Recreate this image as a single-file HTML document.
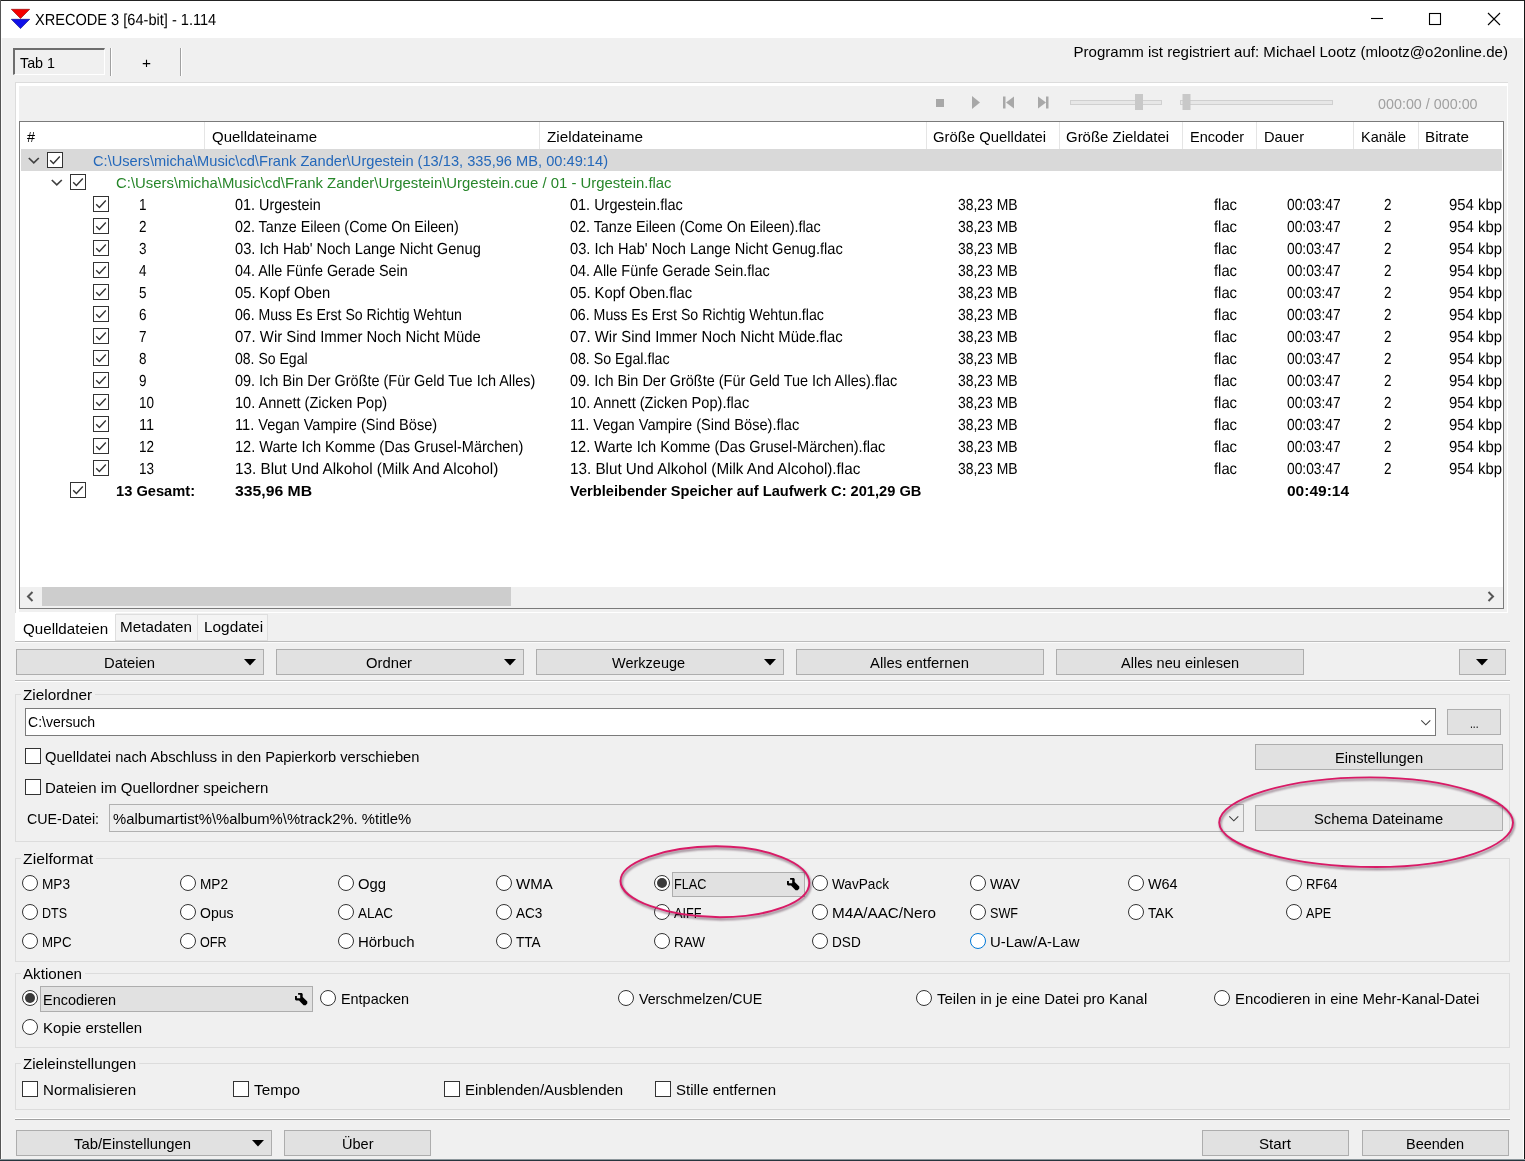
<!DOCTYPE html>
<html lang="de">
<head>
<meta charset="utf-8">
<title>XRECODE 3 [64-bit] - 1.114</title>
<style>
html,body{margin:0;padding:0;}
body{width:1525px;height:1161px;overflow:hidden;background:#f0f0f0;font-family:"Liberation Sans",sans-serif;font-size:15px;color:#000;}
#w{position:relative;width:1525px;height:1161px;overflow:hidden;background:#f0f0f0;}
.r{position:absolute;box-sizing:border-box;}
.t{position:absolute;white-space:pre;line-height:20px;height:20px;}
svg{position:absolute;overflow:visible;}
.btn{position:absolute;box-sizing:border-box;background:#e1e1e1;border:1px solid #adadad;}
.cb{position:absolute;box-sizing:border-box;width:16px;height:16px;background:#fff;border:1px solid #333;}
.rb{position:absolute;box-sizing:border-box;width:16px;height:16px;background:#fff;border:1px solid #333;border-radius:50%;}
.gb{position:absolute;box-sizing:border-box;border:1px solid #dcdcdc;}
</style>
</head>
<body>
<div id="w">
<div class="r" style="left:0px;top:0px;width:1525px;height:38px;background:#ffffff;"></div>
<svg style="left:11px;top:9px" width="20" height="20" viewBox="0 0 20 20"><polygon points="0.300,0.300 18.700,0.300 9.500,9.500" fill="#f40000" stroke="#8a0000" stroke-width="0.600"/><polygon points="0.300,10.300 18.700,10.300 9.500,19.600" fill="#1010e8" stroke="#000078" stroke-width="0.600"/></svg>
<span class="t" style="top:11px;left:35px;font-size:16px;text-rendering:geometricPrecision;transform:scaleX(0.9109);transform-origin:left center;">XRECODE 3 [64-bit] - 1.114</span>
<svg style="left:1360px;top:0" width="165" height="38" viewBox="0 0 165 38"><g stroke="#000" stroke-width="1.1" fill="none"><path d="M11 18.5H23"/><rect x="69.5" y="13.5" width="11" height="11"/><path d="M128 13L140 25M140 13L128 25"/></g></svg>
<div class="r" style="left:13px;top:48px;width:92px;height:27px;border-top:2px solid #6d6d6d;border-left:2px solid #6d6d6d;border-right:1px solid #fff;border-bottom:1px solid #fff;"></div>
<span class="t" style="top:53px;left:20px;transform:scaleX(0.9546);transform-origin:left center;">Tab 1</span>
<div class="r" style="left:110px;top:48px;width:1px;height:28px;background:#a0a0a0;"></div>
<div class="r" style="left:111px;top:48px;width:1px;height:28px;background:#ffffff;"></div>
<div class="r" style="left:180px;top:48px;width:1px;height:28px;background:#a0a0a0;"></div>
<div class="r" style="left:181px;top:48px;width:1px;height:28px;background:#ffffff;"></div>
<span class="t" style="top:53px;left:141.5px;transform:scaleX(1.0278);transform-origin:left center;">+</span>
<span class="t" style="top:42px;right:17px;transform:scaleX(1.0035);transform-origin:right center;">Programm ist registriert auf: Michael Lootz (mlootz@o2online.de)</span>
<div class="r" style="left:15px;top:82px;width:1493px;height:1px;background:#dcdcdc;"></div>
<div class="r" style="left:15px;top:82px;width:1px;height:531px;background:#dcdcdc;"></div>
<div class="r" style="left:16px;top:83px;width:3px;height:530px;background:#ffffff;"></div>
<div class="r" style="left:16px;top:83px;width:1492px;height:3px;background:#ffffff;"></div>
<div class="r" style="left:1507px;top:83px;width:1px;height:530px;background:#ffffff;"></div>
<div class="r" style="left:16px;top:612px;width:1492px;height:1px;background:#ffffff;"></div>
<svg style="left:930px;top:93px" width="420" height="20" viewBox="0 0 420 20"><g fill="#a8a8a8"><rect x="6" y="6" width="8" height="8"/><polygon points="42,3 42,16 50,9.5"/><rect x="73" y="3.5" width="2.5" height="12"/><polygon points="84,3.5 84,15.5 76,9.5"/><polygon points="108,3.5 108,15.5 116,9.5"/><rect x="116" y="3.5" width="2.5" height="12"/></g><rect x="140.5" y="7.5" width="91" height="4" fill="#e7e7e7" stroke="#d0d0d0"/><rect x="205" y="1" width="8" height="16" fill="#c8c8c8"/><rect x="250.500" y="7.5" width="152" height="4" fill="#e7e7e7" stroke="#d0d0d0"/><rect x="252.500" y="1" width="8" height="16" fill="#c8c8c8"/></svg>
<span class="t" style="top:94px;left:1377.5px;color:#a0a0a0;transform:scaleX(0.9552);transform-origin:left center;">000:00 / 000:00</span>
<div class="r" style="left:19px;top:121px;width:1485px;height:488px;background:#ffffff;border:1px solid #7a7a7a;"></div>
<div class="r" style="left:204px;top:122px;width:1px;height:27px;background:#e5e5e5;"></div>
<div class="r" style="left:539px;top:122px;width:1px;height:27px;background:#e5e5e5;"></div>
<div class="r" style="left:926px;top:122px;width:1px;height:27px;background:#e5e5e5;"></div>
<div class="r" style="left:1059px;top:122px;width:1px;height:27px;background:#e5e5e5;"></div>
<div class="r" style="left:1182px;top:122px;width:1px;height:27px;background:#e5e5e5;"></div>
<div class="r" style="left:1256px;top:122px;width:1px;height:27px;background:#e5e5e5;"></div>
<div class="r" style="left:1353px;top:122px;width:1px;height:27px;background:#e5e5e5;"></div>
<div class="r" style="left:1418px;top:122px;width:1px;height:27px;background:#e5e5e5;"></div>
<span class="t" style="top:127px;left:27px;transform:scaleX(0.9598);transform-origin:left center;">#</span>
<span class="t" style="top:127px;left:211.5px;transform:scaleX(0.9990);transform-origin:left center;">Quelldateiname</span>
<span class="t" style="top:127px;left:546.5px;transform:scaleX(1.0199);transform-origin:left center;">Zieldateiname</span>
<span class="t" style="top:127px;left:933px;transform:scaleX(0.9902);transform-origin:left center;">Größe Quelldatei</span>
<span class="t" style="top:127px;left:1066px;transform:scaleX(0.9974);transform-origin:left center;">Größe Zieldatei</span>
<span class="t" style="top:127px;left:1190px;transform:scaleX(0.9674);transform-origin:left center;">Encoder</span>
<span class="t" style="top:127px;left:1263.5px;transform:scaleX(0.9799);transform-origin:left center;">Dauer</span>
<span class="t" style="top:127px;left:1360.5px;transform:scaleX(0.9642);transform-origin:left center;">Kanäle</span>
<span class="t" style="top:127px;left:1425px;transform:scaleX(1.0158);transform-origin:left center;">Bitrate</span>
<div class="r" style="left:21px;top:149px;width:1481px;height:22px;background:#d9d9d9;"></div>
<svg style="left:28px;top:157px" width="12" height="8" viewBox="0 0 12 8"><path d="M0.800 1L5.800 5.800L10.800 1" fill="none" stroke="#404040" stroke-width="1.700"/></svg>
<div class="cb" style="left:47px;top:152px"></div>
<svg style="left:47px;top:152px" width="16" height="16" viewBox="0 0 16 16"><path d="M3.2 8.2L6.4 11.4L12.8 4.600" fill="none" stroke="#333" stroke-width="1.400"/></svg>
<span class="t" style="top:151px;left:92.5px;color:#2468ba;transform:scaleX(0.9759);transform-origin:left center;">C:\Users\micha\Music\cd\Frank Zander\Urgestein (13/13, 335,96 MB, 00:49:14)</span>
<svg style="left:51px;top:179px" width="12" height="8" viewBox="0 0 12 8"><path d="M0.800 1L5.800 5.800L10.800 1" fill="none" stroke="#404040" stroke-width="1.700"/></svg>
<div class="cb" style="left:70px;top:174px"></div>
<svg style="left:70px;top:174px" width="16" height="16" viewBox="0 0 16 16"><path d="M3.2 8.2L6.4 11.4L12.8 4.600" fill="none" stroke="#333" stroke-width="1.400"/></svg>
<span class="t" style="top:173px;left:115.5px;color:#27862a;transform:scaleX(0.9932);transform-origin:left center;">C:\Users\micha\Music\cd\Frank Zander\Urgestein\Urgestein.cue / 01 - Urgestein.flac</span>
<div class="cb" style="left:93px;top:196px"></div>
<svg style="left:93px;top:196px" width="16" height="16" viewBox="0 0 16 16"><path d="M3.2 8.2L6.4 11.4L12.8 4.600" fill="none" stroke="#333" stroke-width="1.400"/></svg>
<span class="t" style="top:196px;left:139px;font-size:16px;text-rendering:geometricPrecision;transform:scaleX(0.8429);transform-origin:left center;">1</span>
<span class="t" style="top:196px;left:235px;font-size:16px;text-rendering:geometricPrecision;transform:scaleX(0.9003);transform-origin:left center;">01. Urgestein</span>
<span class="t" style="top:196px;left:570px;font-size:16px;text-rendering:geometricPrecision;transform:scaleX(0.9052);transform-origin:left center;">01. Urgestein.flac</span>
<span class="t" style="top:196px;left:957.5px;font-size:16px;text-rendering:geometricPrecision;transform:scaleX(0.8697);transform-origin:left center;">38,23 MB</span>
<span class="t" style="top:196px;left:1214px;font-size:16px;text-rendering:geometricPrecision;transform:scaleX(0.9244);transform-origin:left center;">flac</span>
<span class="t" style="top:196px;left:1287px;font-size:16px;text-rendering:geometricPrecision;transform:scaleX(0.8599);transform-origin:left center;">00:03:47</span>
<span class="t" style="top:196px;left:1384px;font-size:16px;text-rendering:geometricPrecision;transform:scaleX(0.8429);transform-origin:left center;">2</span>
<span class="t" style="top:196px;left:1449px;font-size:16px;text-rendering:geometricPrecision;transform:scaleX(0.9318);transform-origin:left center;">954 kbp</span>
<div class="cb" style="left:93px;top:218px"></div>
<svg style="left:93px;top:218px" width="16" height="16" viewBox="0 0 16 16"><path d="M3.2 8.2L6.4 11.4L12.8 4.600" fill="none" stroke="#333" stroke-width="1.400"/></svg>
<span class="t" style="top:218px;left:139px;font-size:16px;text-rendering:geometricPrecision;transform:scaleX(0.8429);transform-origin:left center;">2</span>
<span class="t" style="top:218px;left:235px;font-size:16px;text-rendering:geometricPrecision;transform:scaleX(0.8931);transform-origin:left center;">02. Tanze Eileen (Come On Eileen)</span>
<span class="t" style="top:218px;left:570px;font-size:16px;text-rendering:geometricPrecision;transform:scaleX(0.8960);transform-origin:left center;">02. Tanze Eileen (Come On Eileen).flac</span>
<span class="t" style="top:218px;left:957.5px;font-size:16px;text-rendering:geometricPrecision;transform:scaleX(0.8697);transform-origin:left center;">38,23 MB</span>
<span class="t" style="top:218px;left:1214px;font-size:16px;text-rendering:geometricPrecision;transform:scaleX(0.9244);transform-origin:left center;">flac</span>
<span class="t" style="top:218px;left:1287px;font-size:16px;text-rendering:geometricPrecision;transform:scaleX(0.8599);transform-origin:left center;">00:03:47</span>
<span class="t" style="top:218px;left:1384px;font-size:16px;text-rendering:geometricPrecision;transform:scaleX(0.8429);transform-origin:left center;">2</span>
<span class="t" style="top:218px;left:1449px;font-size:16px;text-rendering:geometricPrecision;transform:scaleX(0.9318);transform-origin:left center;">954 kbp</span>
<div class="cb" style="left:93px;top:240px"></div>
<svg style="left:93px;top:240px" width="16" height="16" viewBox="0 0 16 16"><path d="M3.2 8.2L6.4 11.4L12.8 4.600" fill="none" stroke="#333" stroke-width="1.400"/></svg>
<span class="t" style="top:240px;left:139px;font-size:16px;text-rendering:geometricPrecision;transform:scaleX(0.8429);transform-origin:left center;">3</span>
<span class="t" style="top:240px;left:235px;font-size:16px;text-rendering:geometricPrecision;transform:scaleX(0.9136);transform-origin:left center;">03. Ich Hab&#x27; Noch Lange Nicht Genug</span>
<span class="t" style="top:240px;left:570px;font-size:16px;text-rendering:geometricPrecision;transform:scaleX(0.9143);transform-origin:left center;">03. Ich Hab&#x27; Noch Lange Nicht Genug.flac</span>
<span class="t" style="top:240px;left:957.5px;font-size:16px;text-rendering:geometricPrecision;transform:scaleX(0.8697);transform-origin:left center;">38,23 MB</span>
<span class="t" style="top:240px;left:1214px;font-size:16px;text-rendering:geometricPrecision;transform:scaleX(0.9244);transform-origin:left center;">flac</span>
<span class="t" style="top:240px;left:1287px;font-size:16px;text-rendering:geometricPrecision;transform:scaleX(0.8599);transform-origin:left center;">00:03:47</span>
<span class="t" style="top:240px;left:1384px;font-size:16px;text-rendering:geometricPrecision;transform:scaleX(0.8429);transform-origin:left center;">2</span>
<span class="t" style="top:240px;left:1449px;font-size:16px;text-rendering:geometricPrecision;transform:scaleX(0.9318);transform-origin:left center;">954 kbp</span>
<div class="cb" style="left:93px;top:262px"></div>
<svg style="left:93px;top:262px" width="16" height="16" viewBox="0 0 16 16"><path d="M3.2 8.2L6.4 11.4L12.8 4.600" fill="none" stroke="#333" stroke-width="1.400"/></svg>
<span class="t" style="top:262px;left:139px;font-size:16px;text-rendering:geometricPrecision;transform:scaleX(0.8429);transform-origin:left center;">4</span>
<span class="t" style="top:262px;left:235px;font-size:16px;text-rendering:geometricPrecision;transform:scaleX(0.8988);transform-origin:left center;">04. Alle Fünfe Gerade Sein</span>
<span class="t" style="top:262px;left:570px;font-size:16px;text-rendering:geometricPrecision;transform:scaleX(0.9017);transform-origin:left center;">04. Alle Fünfe Gerade Sein.flac</span>
<span class="t" style="top:262px;left:957.5px;font-size:16px;text-rendering:geometricPrecision;transform:scaleX(0.8697);transform-origin:left center;">38,23 MB</span>
<span class="t" style="top:262px;left:1214px;font-size:16px;text-rendering:geometricPrecision;transform:scaleX(0.9244);transform-origin:left center;">flac</span>
<span class="t" style="top:262px;left:1287px;font-size:16px;text-rendering:geometricPrecision;transform:scaleX(0.8599);transform-origin:left center;">00:03:47</span>
<span class="t" style="top:262px;left:1384px;font-size:16px;text-rendering:geometricPrecision;transform:scaleX(0.8429);transform-origin:left center;">2</span>
<span class="t" style="top:262px;left:1449px;font-size:16px;text-rendering:geometricPrecision;transform:scaleX(0.9318);transform-origin:left center;">954 kbp</span>
<div class="cb" style="left:93px;top:284px"></div>
<svg style="left:93px;top:284px" width="16" height="16" viewBox="0 0 16 16"><path d="M3.2 8.2L6.4 11.4L12.8 4.600" fill="none" stroke="#333" stroke-width="1.400"/></svg>
<span class="t" style="top:284px;left:139px;font-size:16px;text-rendering:geometricPrecision;transform:scaleX(0.8429);transform-origin:left center;">5</span>
<span class="t" style="top:284px;left:235px;font-size:16px;text-rendering:geometricPrecision;transform:scaleX(0.9216);transform-origin:left center;">05. Kopf Oben</span>
<span class="t" style="top:284px;left:570px;font-size:16px;text-rendering:geometricPrecision;transform:scaleX(0.9215);transform-origin:left center;">05. Kopf Oben.flac</span>
<span class="t" style="top:284px;left:957.5px;font-size:16px;text-rendering:geometricPrecision;transform:scaleX(0.8697);transform-origin:left center;">38,23 MB</span>
<span class="t" style="top:284px;left:1214px;font-size:16px;text-rendering:geometricPrecision;transform:scaleX(0.9244);transform-origin:left center;">flac</span>
<span class="t" style="top:284px;left:1287px;font-size:16px;text-rendering:geometricPrecision;transform:scaleX(0.8599);transform-origin:left center;">00:03:47</span>
<span class="t" style="top:284px;left:1384px;font-size:16px;text-rendering:geometricPrecision;transform:scaleX(0.8429);transform-origin:left center;">2</span>
<span class="t" style="top:284px;left:1449px;font-size:16px;text-rendering:geometricPrecision;transform:scaleX(0.9318);transform-origin:left center;">954 kbp</span>
<div class="cb" style="left:93px;top:306px"></div>
<svg style="left:93px;top:306px" width="16" height="16" viewBox="0 0 16 16"><path d="M3.2 8.2L6.4 11.4L12.8 4.600" fill="none" stroke="#333" stroke-width="1.400"/></svg>
<span class="t" style="top:306px;left:139px;font-size:16px;text-rendering:geometricPrecision;transform:scaleX(0.8429);transform-origin:left center;">6</span>
<span class="t" style="top:306px;left:235px;font-size:16px;text-rendering:geometricPrecision;transform:scaleX(0.8806);transform-origin:left center;">06. Muss Es Erst So Richtig Wehtun</span>
<span class="t" style="top:306px;left:570px;font-size:16px;text-rendering:geometricPrecision;transform:scaleX(0.8847);transform-origin:left center;">06. Muss Es Erst So Richtig Wehtun.flac</span>
<span class="t" style="top:306px;left:957.5px;font-size:16px;text-rendering:geometricPrecision;transform:scaleX(0.8697);transform-origin:left center;">38,23 MB</span>
<span class="t" style="top:306px;left:1214px;font-size:16px;text-rendering:geometricPrecision;transform:scaleX(0.9244);transform-origin:left center;">flac</span>
<span class="t" style="top:306px;left:1287px;font-size:16px;text-rendering:geometricPrecision;transform:scaleX(0.8599);transform-origin:left center;">00:03:47</span>
<span class="t" style="top:306px;left:1384px;font-size:16px;text-rendering:geometricPrecision;transform:scaleX(0.8429);transform-origin:left center;">2</span>
<span class="t" style="top:306px;left:1449px;font-size:16px;text-rendering:geometricPrecision;transform:scaleX(0.9318);transform-origin:left center;">954 kbp</span>
<div class="cb" style="left:93px;top:328px"></div>
<svg style="left:93px;top:328px" width="16" height="16" viewBox="0 0 16 16"><path d="M3.2 8.2L6.4 11.4L12.8 4.600" fill="none" stroke="#333" stroke-width="1.400"/></svg>
<span class="t" style="top:328px;left:139px;font-size:16px;text-rendering:geometricPrecision;transform:scaleX(0.8429);transform-origin:left center;">7</span>
<span class="t" style="top:328px;left:235px;font-size:16px;text-rendering:geometricPrecision;transform:scaleX(0.9306);transform-origin:left center;">07. Wir Sind Immer Noch Nicht Müde</span>
<span class="t" style="top:328px;left:570px;font-size:16px;text-rendering:geometricPrecision;transform:scaleX(0.9296);transform-origin:left center;">07. Wir Sind Immer Noch Nicht Müde.flac</span>
<span class="t" style="top:328px;left:957.5px;font-size:16px;text-rendering:geometricPrecision;transform:scaleX(0.8697);transform-origin:left center;">38,23 MB</span>
<span class="t" style="top:328px;left:1214px;font-size:16px;text-rendering:geometricPrecision;transform:scaleX(0.9244);transform-origin:left center;">flac</span>
<span class="t" style="top:328px;left:1287px;font-size:16px;text-rendering:geometricPrecision;transform:scaleX(0.8599);transform-origin:left center;">00:03:47</span>
<span class="t" style="top:328px;left:1384px;font-size:16px;text-rendering:geometricPrecision;transform:scaleX(0.8429);transform-origin:left center;">2</span>
<span class="t" style="top:328px;left:1449px;font-size:16px;text-rendering:geometricPrecision;transform:scaleX(0.9318);transform-origin:left center;">954 kbp</span>
<div class="cb" style="left:93px;top:350px"></div>
<svg style="left:93px;top:350px" width="16" height="16" viewBox="0 0 16 16"><path d="M3.2 8.2L6.4 11.4L12.8 4.600" fill="none" stroke="#333" stroke-width="1.400"/></svg>
<span class="t" style="top:350px;left:139px;font-size:16px;text-rendering:geometricPrecision;transform:scaleX(0.8429);transform-origin:left center;">8</span>
<span class="t" style="top:350px;left:235px;font-size:16px;text-rendering:geometricPrecision;transform:scaleX(0.8772);transform-origin:left center;">08. So Egal</span>
<span class="t" style="top:350px;left:570px;font-size:16px;text-rendering:geometricPrecision;transform:scaleX(0.8887);transform-origin:left center;">08. So Egal.flac</span>
<span class="t" style="top:350px;left:957.5px;font-size:16px;text-rendering:geometricPrecision;transform:scaleX(0.8697);transform-origin:left center;">38,23 MB</span>
<span class="t" style="top:350px;left:1214px;font-size:16px;text-rendering:geometricPrecision;transform:scaleX(0.9244);transform-origin:left center;">flac</span>
<span class="t" style="top:350px;left:1287px;font-size:16px;text-rendering:geometricPrecision;transform:scaleX(0.8599);transform-origin:left center;">00:03:47</span>
<span class="t" style="top:350px;left:1384px;font-size:16px;text-rendering:geometricPrecision;transform:scaleX(0.8429);transform-origin:left center;">2</span>
<span class="t" style="top:350px;left:1449px;font-size:16px;text-rendering:geometricPrecision;transform:scaleX(0.9318);transform-origin:left center;">954 kbp</span>
<div class="cb" style="left:93px;top:372px"></div>
<svg style="left:93px;top:372px" width="16" height="16" viewBox="0 0 16 16"><path d="M3.2 8.2L6.4 11.4L12.8 4.600" fill="none" stroke="#333" stroke-width="1.400"/></svg>
<span class="t" style="top:372px;left:139px;font-size:16px;text-rendering:geometricPrecision;transform:scaleX(0.8429);transform-origin:left center;">9</span>
<span class="t" style="top:372px;left:235px;font-size:16px;text-rendering:geometricPrecision;transform:scaleX(0.9029);transform-origin:left center;">09. Ich Bin Der Größte (Für Geld Tue Ich Alles)</span>
<span class="t" style="top:372px;left:570px;font-size:16px;text-rendering:geometricPrecision;transform:scaleX(0.9044);transform-origin:left center;">09. Ich Bin Der Größte (Für Geld Tue Ich Alles).flac</span>
<span class="t" style="top:372px;left:957.5px;font-size:16px;text-rendering:geometricPrecision;transform:scaleX(0.8697);transform-origin:left center;">38,23 MB</span>
<span class="t" style="top:372px;left:1214px;font-size:16px;text-rendering:geometricPrecision;transform:scaleX(0.9244);transform-origin:left center;">flac</span>
<span class="t" style="top:372px;left:1287px;font-size:16px;text-rendering:geometricPrecision;transform:scaleX(0.8599);transform-origin:left center;">00:03:47</span>
<span class="t" style="top:372px;left:1384px;font-size:16px;text-rendering:geometricPrecision;transform:scaleX(0.8429);transform-origin:left center;">2</span>
<span class="t" style="top:372px;left:1449px;font-size:16px;text-rendering:geometricPrecision;transform:scaleX(0.9318);transform-origin:left center;">954 kbp</span>
<div class="cb" style="left:93px;top:394px"></div>
<svg style="left:93px;top:394px" width="16" height="16" viewBox="0 0 16 16"><path d="M3.2 8.2L6.4 11.4L12.8 4.600" fill="none" stroke="#333" stroke-width="1.400"/></svg>
<span class="t" style="top:394px;left:139px;font-size:16px;text-rendering:geometricPrecision;transform:scaleX(0.8437);transform-origin:left center;">10</span>
<span class="t" style="top:394px;left:235px;font-size:16px;text-rendering:geometricPrecision;transform:scaleX(0.9100);transform-origin:left center;">10. Annett (Zicken Pop)</span>
<span class="t" style="top:394px;left:570px;font-size:16px;text-rendering:geometricPrecision;transform:scaleX(0.9116);transform-origin:left center;">10. Annett (Zicken Pop).flac</span>
<span class="t" style="top:394px;left:957.5px;font-size:16px;text-rendering:geometricPrecision;transform:scaleX(0.8697);transform-origin:left center;">38,23 MB</span>
<span class="t" style="top:394px;left:1214px;font-size:16px;text-rendering:geometricPrecision;transform:scaleX(0.9244);transform-origin:left center;">flac</span>
<span class="t" style="top:394px;left:1287px;font-size:16px;text-rendering:geometricPrecision;transform:scaleX(0.8599);transform-origin:left center;">00:03:47</span>
<span class="t" style="top:394px;left:1384px;font-size:16px;text-rendering:geometricPrecision;transform:scaleX(0.8429);transform-origin:left center;">2</span>
<span class="t" style="top:394px;left:1449px;font-size:16px;text-rendering:geometricPrecision;transform:scaleX(0.9318);transform-origin:left center;">954 kbp</span>
<div class="cb" style="left:93px;top:416px"></div>
<svg style="left:93px;top:416px" width="16" height="16" viewBox="0 0 16 16"><path d="M3.2 8.2L6.4 11.4L12.8 4.600" fill="none" stroke="#333" stroke-width="1.400"/></svg>
<span class="t" style="top:416px;left:139px;font-size:16px;text-rendering:geometricPrecision;transform:scaleX(0.9040);transform-origin:left center;">11</span>
<span class="t" style="top:416px;left:235px;font-size:16px;text-rendering:geometricPrecision;transform:scaleX(0.9118);transform-origin:left center;">11. Vegan Vampire (Sind Böse)</span>
<span class="t" style="top:416px;left:570px;font-size:16px;text-rendering:geometricPrecision;transform:scaleX(0.9129);transform-origin:left center;">11. Vegan Vampire (Sind Böse).flac</span>
<span class="t" style="top:416px;left:957.5px;font-size:16px;text-rendering:geometricPrecision;transform:scaleX(0.8697);transform-origin:left center;">38,23 MB</span>
<span class="t" style="top:416px;left:1214px;font-size:16px;text-rendering:geometricPrecision;transform:scaleX(0.9244);transform-origin:left center;">flac</span>
<span class="t" style="top:416px;left:1287px;font-size:16px;text-rendering:geometricPrecision;transform:scaleX(0.8599);transform-origin:left center;">00:03:47</span>
<span class="t" style="top:416px;left:1384px;font-size:16px;text-rendering:geometricPrecision;transform:scaleX(0.8429);transform-origin:left center;">2</span>
<span class="t" style="top:416px;left:1449px;font-size:16px;text-rendering:geometricPrecision;transform:scaleX(0.9318);transform-origin:left center;">954 kbp</span>
<div class="cb" style="left:93px;top:438px"></div>
<svg style="left:93px;top:438px" width="16" height="16" viewBox="0 0 16 16"><path d="M3.2 8.2L6.4 11.4L12.8 4.600" fill="none" stroke="#333" stroke-width="1.400"/></svg>
<span class="t" style="top:438px;left:139px;font-size:16px;text-rendering:geometricPrecision;transform:scaleX(0.8437);transform-origin:left center;">12</span>
<span class="t" style="top:438px;left:235px;font-size:16px;text-rendering:geometricPrecision;transform:scaleX(0.9099);transform-origin:left center;">12. Warte Ich Komme (Das Grusel-Märchen)</span>
<span class="t" style="top:438px;left:570px;font-size:16px;text-rendering:geometricPrecision;transform:scaleX(0.9109);transform-origin:left center;">12. Warte Ich Komme (Das Grusel-Märchen).flac</span>
<span class="t" style="top:438px;left:957.5px;font-size:16px;text-rendering:geometricPrecision;transform:scaleX(0.8697);transform-origin:left center;">38,23 MB</span>
<span class="t" style="top:438px;left:1214px;font-size:16px;text-rendering:geometricPrecision;transform:scaleX(0.9244);transform-origin:left center;">flac</span>
<span class="t" style="top:438px;left:1287px;font-size:16px;text-rendering:geometricPrecision;transform:scaleX(0.8599);transform-origin:left center;">00:03:47</span>
<span class="t" style="top:438px;left:1384px;font-size:16px;text-rendering:geometricPrecision;transform:scaleX(0.8429);transform-origin:left center;">2</span>
<span class="t" style="top:438px;left:1449px;font-size:16px;text-rendering:geometricPrecision;transform:scaleX(0.9318);transform-origin:left center;">954 kbp</span>
<div class="cb" style="left:93px;top:460px"></div>
<svg style="left:93px;top:460px" width="16" height="16" viewBox="0 0 16 16"><path d="M3.2 8.2L6.4 11.4L12.8 4.600" fill="none" stroke="#333" stroke-width="1.400"/></svg>
<span class="t" style="top:460px;left:139px;font-size:16px;text-rendering:geometricPrecision;transform:scaleX(0.8437);transform-origin:left center;">13</span>
<span class="t" style="top:460px;left:235px;font-size:16px;text-rendering:geometricPrecision;transform:scaleX(0.9549);transform-origin:left center;">13. Blut Und Alkohol (Milk And Alcohol)</span>
<span class="t" style="top:460px;left:570px;font-size:16px;text-rendering:geometricPrecision;transform:scaleX(0.9516);transform-origin:left center;">13. Blut Und Alkohol (Milk And Alcohol).flac</span>
<span class="t" style="top:460px;left:957.5px;font-size:16px;text-rendering:geometricPrecision;transform:scaleX(0.8697);transform-origin:left center;">38,23 MB</span>
<span class="t" style="top:460px;left:1214px;font-size:16px;text-rendering:geometricPrecision;transform:scaleX(0.9244);transform-origin:left center;">flac</span>
<span class="t" style="top:460px;left:1287px;font-size:16px;text-rendering:geometricPrecision;transform:scaleX(0.8599);transform-origin:left center;">00:03:47</span>
<span class="t" style="top:460px;left:1384px;font-size:16px;text-rendering:geometricPrecision;transform:scaleX(0.8429);transform-origin:left center;">2</span>
<span class="t" style="top:460px;left:1449px;font-size:16px;text-rendering:geometricPrecision;transform:scaleX(0.9318);transform-origin:left center;">954 kbp</span>
<div class="cb" style="left:70px;top:482px"></div>
<svg style="left:70px;top:482px" width="16" height="16" viewBox="0 0 16 16"><path d="M3.2 8.2L6.4 11.4L12.8 4.600" fill="none" stroke="#333" stroke-width="1.400"/></svg>
<span class="t" style="top:481px;left:116px;font-weight:bold;transform:scaleX(0.9778);transform-origin:left center;">13 Gesamt:</span>
<span class="t" style="top:481px;left:235px;font-weight:bold;transform:scaleX(1.0505);transform-origin:left center;">335,96 MB</span>
<span class="t" style="top:481px;left:570px;font-weight:bold;transform:scaleX(0.9756);transform-origin:left center;">Verbleibender Speicher auf Laufwerk C: 201,29 GB</span>
<span class="t" style="top:481px;left:1287px;font-weight:bold;transform:scaleX(1.0336);transform-origin:left center;">00:49:14</span>
<div class="r" style="left:1502px;top:150px;width:1px;height:436px;background:#ffffff;"></div>
<div class="r" style="left:20px;top:587px;width:1483px;height:21px;background:#f0f0f0;"></div>
<div class="r" style="left:42px;top:587px;width:469px;height:19px;background:#cdcdcd;"></div>
<svg style="left:26px;top:591px" width="8" height="11" viewBox="0 0 8 11"><path d="M6.5 1L2 5.500L6.5 10" fill="none" stroke="#555" stroke-width="2"/></svg>
<svg style="left:1487px;top:591px" width="8" height="11" viewBox="0 0 8 11"><path d="M1.5 1L6 5.500L1.500 10" fill="none" stroke="#555" stroke-width="2"/></svg>
<div class="r" style="left:15px;top:613px;width:101px;height:28px;background:#ffffff;"></div>
<div class="r" style="left:115px;top:614px;width:83px;height:27px;background:#f4f4f4;border:1px solid #dedede;"></div>
<div class="r" style="left:197px;top:614px;width:71px;height:27px;background:#f4f4f4;border:1px solid #dedede;"></div>
<div class="r" style="left:15px;top:641px;width:1495px;height:1px;background:#bcbcbc;"></div>
<div class="r" style="left:15px;top:642px;width:1495px;height:1px;background:#fbfbfb;"></div>
<span class="t" style="top:619px;left:23px;transform:scaleX(1.0101);transform-origin:left center;">Quelldateien</span>
<span class="t" style="top:617px;left:120px;transform:scaleX(1.0167);transform-origin:left center;">Metadaten</span>
<span class="t" style="top:617px;left:204px;transform:scaleX(1.0260);transform-origin:left center;">Logdatei</span>
<div class="btn" style="left:16px;top:649px;width:248px;height:26px"></div>
<span class="t" style="top:653px;left:104px;transform:scaleX(0.9874);transform-origin:left center;">Dateien</span>
<svg style="left:244px;top:659px" width="12" height="7" viewBox="0 0 12 7"><polygon points="0,0 12,0 6,6.500" fill="#000"/></svg>
<div class="btn" style="left:276px;top:649px;width:248px;height:26px"></div>
<span class="t" style="top:653px;left:366px;transform:scaleX(0.9863);transform-origin:left center;">Ordner</span>
<svg style="left:504px;top:659px" width="12" height="7" viewBox="0 0 12 7"><polygon points="0,0 12,0 6,6.500" fill="#000"/></svg>
<div class="btn" style="left:536px;top:649px;width:248px;height:26px"></div>
<span class="t" style="top:653px;left:612px;transform:scaleX(0.9667);transform-origin:left center;">Werkzeuge</span>
<svg style="left:764px;top:659px" width="12" height="7" viewBox="0 0 12 7"><polygon points="0,0 12,0 6,6.500" fill="#000"/></svg>
<div class="btn" style="left:796px;top:649px;width:248px;height:26px"></div>
<span class="t" style="top:653px;left:870px;transform:scaleX(0.9902);transform-origin:left center;">Alles entfernen</span>
<div class="btn" style="left:1056px;top:649px;width:248px;height:26px"></div>
<span class="t" style="top:653px;left:1121px;transform:scaleX(0.9700);transform-origin:left center;">Alles neu einlesen</span>
<div class="btn" style="left:1459px;top:649px;width:47px;height:26px"></div>
<svg style="left:1476px;top:659px" width="12" height="7" viewBox="0 0 12 7"><polygon points="0,0 12,0 6,6.500" fill="#000"/></svg>
<div class="r" style="left:15px;top:680px;width:1495px;height:1px;background:#bcbcbc;"></div>
<div class="r" style="left:15px;top:681px;width:1495px;height:1px;background:#ffffff;"></div>
<div class="gb" style="left:15px;top:694px;width:1495px;height:148px"></div>
<div class="r" style="left:21px;top:692px;width:74px;height:5px;background:#f0f0f0;"></div>
<span class="t" style="top:685px;left:23px;transform:scaleX(1.0228);transform-origin:left center;">Zielordner</span>
<div class="r" style="left:25px;top:708px;width:1411px;height:28px;background:#ffffff;border:1px solid #7a7a7a;"></div>
<span class="t" style="top:712px;left:28px;transform:scaleX(0.9353);transform-origin:left center;">C:\versuch</span>
<svg style="left:1421px;top:720px" width="10" height="6" viewBox="0 0 10 6"><path d="M0.300 0.300L4.800 4.800L9.300 0.300" fill="none" stroke="#404040" stroke-width="1.100"/></svg>
<div class="btn" style="left:1447px;top:709px;width:54px;height:26px"></div>
<span class="t" style="top:713px;left:1469.5px;transform:scaleX(0.6798);transform-origin:left center;">...</span>
<div class="cb" style="left:25px;top:748px"></div>
<span class="t" style="top:747px;left:45px;transform:scaleX(0.9782);transform-origin:left center;">Quelldatei nach Abschluss in den Papierkorb verschieben</span>
<div class="btn" style="left:1255px;top:744px;width:248px;height:26px"></div>
<span class="t" style="top:748px;left:1335px;transform:scaleX(0.9779);transform-origin:left center;">Einstellungen</span>
<div class="cb" style="left:25px;top:779px"></div>
<span class="t" style="top:778px;left:45px;transform:scaleX(0.9990);transform-origin:left center;">Dateien im Quellordner speichern</span>
<span class="t" style="top:809px;left:27px;transform:scaleX(0.9501);transform-origin:left center;">CUE-Datei:</span>
<div class="r" style="left:109px;top:804px;width:1135px;height:28px;background:#eeeeee;border:1px solid #b0b0b0;"></div>
<span class="t" style="top:809px;left:113px;transform:scaleX(0.9885);transform-origin:left center;">%albumartist%\%album%\%track2%. %title%</span>
<svg style="left:1229px;top:816px" width="10" height="6" viewBox="0 0 10 6"><path d="M0.300 0.300L4.800 4.800L9.300 0.300" fill="none" stroke="#404040" stroke-width="1.100"/></svg>
<div class="btn" style="left:1255px;top:805px;width:248px;height:26px"></div>
<span class="t" style="top:809px;left:1314px;transform:scaleX(0.9802);transform-origin:left center;">Schema Dateiname</span>
<div class="gb" style="left:15px;top:858px;width:1495px;height:104px"></div>
<div class="r" style="left:21px;top:856px;width:75px;height:5px;background:#f0f0f0;"></div>
<span class="t" style="top:849px;left:23px;transform:scaleX(1.0507);transform-origin:left center;">Zielformat</span>
<div class="rb" style="left:22px;top:875px;border-color:#333"></div>
<span class="t" style="top:874px;left:42px;transform:scaleX(0.9087);transform-origin:left center;">MP3</span>
<div class="rb" style="left:180px;top:875px;border-color:#333"></div>
<span class="t" style="top:874px;left:200px;transform:scaleX(0.9087);transform-origin:left center;">MP2</span>
<div class="rb" style="left:338px;top:875px;border-color:#333"></div>
<span class="t" style="top:874px;left:358px;transform:scaleX(0.9883);transform-origin:left center;">Ogg</span>
<div class="rb" style="left:496px;top:875px;border-color:#333"></div>
<span class="t" style="top:874px;left:516px;transform:scaleX(1.0018);transform-origin:left center;">WMA</span>
<div class="btn" style="left:672px;top:872px;width:133px;height:25px"></div>
<svg style="left:787px;top:878px" width="13" height="13" viewBox="0 0 13 13"><path d="M3.1 0H6.8L7.7 1V4L12.3 8.600V10.600L10.700 12.200H8.600L4 7.600H1L0 6.600V3.100H1.900V5.200H5.200V1.700H3.100Z" fill="#000"/></svg>
<div class="rb" style="left:654px;top:875px;border-color:#333"></div>
<div class="r" style="left:657px;top:878px;width:10px;height:10px;border-radius:50%;background:#3a3a3a"></div>
<span class="t" style="top:874px;left:674px;transform:scaleX(0.8484);transform-origin:left center;">FLAC</span>
<div class="rb" style="left:812px;top:875px;border-color:#333"></div>
<span class="t" style="top:874px;left:832px;transform:scaleX(0.9086);transform-origin:left center;">WavPack</span>
<div class="rb" style="left:970px;top:875px;border-color:#333"></div>
<span class="t" style="top:874px;left:990px;transform:scaleX(0.9240);transform-origin:left center;">WAV</span>
<div class="rb" style="left:1128px;top:875px;border-color:#333"></div>
<span class="t" style="top:874px;left:1148px;transform:scaleX(0.9606);transform-origin:left center;">W64</span>
<div class="rb" style="left:1286px;top:875px;border-color:#333"></div>
<span class="t" style="top:874px;left:1306px;transform:scaleX(0.8595);transform-origin:left center;">RF64</span>
<div class="rb" style="left:22px;top:904px;border-color:#333"></div>
<span class="t" style="top:903px;left:42px;transform:scaleX(0.8342);transform-origin:left center;">DTS</span>
<div class="rb" style="left:180px;top:904px;border-color:#333"></div>
<span class="t" style="top:903px;left:200px;transform:scaleX(0.9351);transform-origin:left center;">Opus</span>
<div class="rb" style="left:338px;top:904px;border-color:#333"></div>
<span class="t" style="top:903px;left:358px;transform:scaleX(0.8940);transform-origin:left center;">ALAC</span>
<div class="rb" style="left:496px;top:904px;border-color:#333"></div>
<span class="t" style="top:903px;left:516px;transform:scaleX(0.9054);transform-origin:left center;">AC3</span>
<div class="rb" style="left:654px;top:904px;border-color:#333"></div>
<span class="t" style="top:903px;left:674px;transform:scaleX(0.8470);transform-origin:left center;">AIFF</span>
<div class="rb" style="left:812px;top:904px;border-color:#333"></div>
<span class="t" style="top:903px;left:832px;transform:scaleX(1.0152);transform-origin:left center;">M4A/AAC/Nero</span>
<div class="rb" style="left:970px;top:904px;border-color:#333"></div>
<span class="t" style="top:903px;left:990px;transform:scaleX(0.8410);transform-origin:left center;">SWF</span>
<div class="rb" style="left:1128px;top:904px;border-color:#333"></div>
<span class="t" style="top:903px;left:1148px;transform:scaleX(0.9132);transform-origin:left center;">TAK</span>
<div class="rb" style="left:1286px;top:904px;border-color:#333"></div>
<span class="t" style="top:903px;left:1306px;transform:scaleX(0.8404);transform-origin:left center;">APE</span>
<div class="rb" style="left:22px;top:933px;border-color:#333"></div>
<span class="t" style="top:932px;left:42px;transform:scaleX(0.8856);transform-origin:left center;">MPC</span>
<div class="rb" style="left:180px;top:933px;border-color:#333"></div>
<span class="t" style="top:932px;left:200px;transform:scaleX(0.8407);transform-origin:left center;">OFR</span>
<div class="rb" style="left:338px;top:933px;border-color:#333"></div>
<span class="t" style="top:932px;left:358px;transform:scaleX(0.9974);transform-origin:left center;">Hörbuch</span>
<div class="rb" style="left:496px;top:933px;border-color:#333"></div>
<span class="t" style="top:932px;left:516px;transform:scaleX(0.9047);transform-origin:left center;">TTA</span>
<div class="rb" style="left:654px;top:933px;border-color:#333"></div>
<span class="t" style="top:932px;left:674px;transform:scaleX(0.9007);transform-origin:left center;">RAW</span>
<div class="rb" style="left:812px;top:933px;border-color:#333"></div>
<span class="t" style="top:932px;left:832px;transform:scaleX(0.9071);transform-origin:left center;">DSD</span>
<div class="rb" style="left:970px;top:933px;border-color:#0078d7"></div>
<span class="t" style="top:932px;left:990px;transform:scaleX(0.9929);transform-origin:left center;">U-Law/A-Law</span>
<div class="gb" style="left:15px;top:973px;width:1495px;height:75px"></div>
<div class="r" style="left:21px;top:971px;width:64px;height:5px;background:#f0f0f0;"></div>
<span class="t" style="top:964px;left:23px;transform:scaleX(1.0117);transform-origin:left center;">Aktionen</span>
<div class="btn" style="left:40px;top:986px;width:273px;height:26px"></div>
<svg style="left:295px;top:993px" width="13" height="13" viewBox="0 0 13 13"><path d="M3.1 0H6.8L7.7 1V4L12.3 8.600V10.600L10.700 12.200H8.600L4 7.600H1L0 6.600V3.100H1.900V5.200H5.200V1.700H3.100Z" fill="#000"/></svg>
<div class="rb" style="left:22px;top:990px;border-color:#333"></div>
<div class="r" style="left:25px;top:993px;width:10px;height:10px;border-radius:50%;background:#3a3a3a"></div>
<span class="t" style="top:990px;left:42.5px;transform:scaleX(0.9629);transform-origin:left center;">Encodieren</span>
<div class="rb" style="left:320px;top:990px;border-color:#333"></div>
<span class="t" style="top:989px;left:340.5px;transform:scaleX(0.9602);transform-origin:left center;">Entpacken</span>
<div class="rb" style="left:618px;top:990px;border-color:#333"></div>
<span class="t" style="top:989px;left:638.5px;transform:scaleX(0.9466);transform-origin:left center;">Verschmelzen/CUE</span>
<div class="rb" style="left:916px;top:990px;border-color:#333"></div>
<span class="t" style="top:989px;left:936.5px;transform:scaleX(0.9964);transform-origin:left center;">Teilen in je eine Datei pro Kanal</span>
<div class="rb" style="left:1214px;top:990px;border-color:#333"></div>
<span class="t" style="top:989px;left:1234.5px;transform:scaleX(0.9929);transform-origin:left center;">Encodieren in eine Mehr-Kanal-Datei</span>
<div class="rb" style="left:22px;top:1019px;border-color:#333"></div>
<span class="t" style="top:1018px;left:42.5px;transform:scaleX(0.9986);transform-origin:left center;">Kopie erstellen</span>
<div class="gb" style="left:15px;top:1063px;width:1495px;height:47px"></div>
<div class="r" style="left:21px;top:1061px;width:118px;height:5px;background:#f0f0f0;"></div>
<span class="t" style="top:1054px;left:23px;transform:scaleX(1.0048);transform-origin:left center;">Zieleinstellungen</span>
<div class="cb" style="left:22px;top:1081px"></div>
<span class="t" style="top:1080px;left:42.5px;transform:scaleX(1.0061);transform-origin:left center;">Normalisieren</span>
<div class="cb" style="left:233px;top:1081px"></div>
<span class="t" style="top:1080px;left:253.5px;transform:scaleX(1.0225);transform-origin:left center;">Tempo</span>
<div class="cb" style="left:444px;top:1081px"></div>
<span class="t" style="top:1080px;left:464.5px;transform:scaleX(0.9980);transform-origin:left center;">Einblenden/Ausblenden</span>
<div class="cb" style="left:655px;top:1081px"></div>
<span class="t" style="top:1080px;left:675.5px;transform:scaleX(0.9990);transform-origin:left center;">Stille entfernen</span>
<div class="r" style="left:15px;top:1118px;width:1495px;height:1px;background:#ffffff;"></div>
<div class="r" style="left:15px;top:1119px;width:1495px;height:1px;background:#a0a0a0;"></div>
<div class="btn" style="left:16px;top:1130px;width:256px;height:26px"></div>
<span class="t" style="top:1134px;left:74px;transform:scaleX(0.9890);transform-origin:left center;">Tab/Einstellungen</span>
<svg style="left:252px;top:1140px" width="12" height="7" viewBox="0 0 12 7"><polygon points="0,0 12,0 6,6.500" fill="#000"/></svg>
<div class="btn" style="left:284px;top:1130px;width:147px;height:26px"></div>
<span class="t" style="top:1134px;left:341.5px;transform:scaleX(0.9697);transform-origin:left center;">Über</span>
<div class="btn" style="left:1202px;top:1130px;width:147px;height:26px"></div>
<span class="t" style="top:1134px;left:1259px;transform:scaleX(1.0109);transform-origin:left center;">Start</span>
<div class="btn" style="left:1362px;top:1130px;width:147px;height:26px"></div>
<span class="t" style="top:1134px;left:1406px;transform:scaleX(0.9666);transform-origin:left center;">Beenden</span>
<svg style="left:0;top:0;filter:drop-shadow(1.500px 2px 1.200px rgba(70,30,55,0.600))" width="1525" height="1161" viewBox="0 0 1525 1161"><g fill="none" stroke="#d91a66" stroke-width="1.900"><path d="M620.500 881C620.500 863 664 846.300 716 846.300C768 846.300 809.300 863.500 809.300 883C809.300 902 770 917.200 720 917.200C668 917.200 620.500 900 620.500 881Z"/><path d="M1219.200 822.500C1219.200 799 1288 777.400 1370 777.400C1452 777.400 1513 800 1513 822.500C1513 846 1456 867 1376 867C1292 867 1219.200 846 1219.200 822.500Z"/></g></svg>
<div class="r" style="left:0px;top:0px;width:1525px;height:1px;background:#222222;"></div>
<div class="r" style="left:1px;top:38px;width:1px;height:1121px;background:#fafafa;"></div>
<div class="r" style="left:0px;top:0px;width:1px;height:1161px;background:#555555;"></div>
<div class="r" style="left:1523px;top:38px;width:1px;height:1121px;background:#ffffff;"></div>
<div class="r" style="left:1524px;top:0px;width:1px;height:1161px;background:#151515;"></div>
<div class="r" style="left:0px;top:1159px;width:1525px;height:1px;background:#8d979c;"></div>
<div class="r" style="left:0px;top:1160px;width:1525px;height:1px;background:#26363e;"></div>
</div>
</body>
</html>
